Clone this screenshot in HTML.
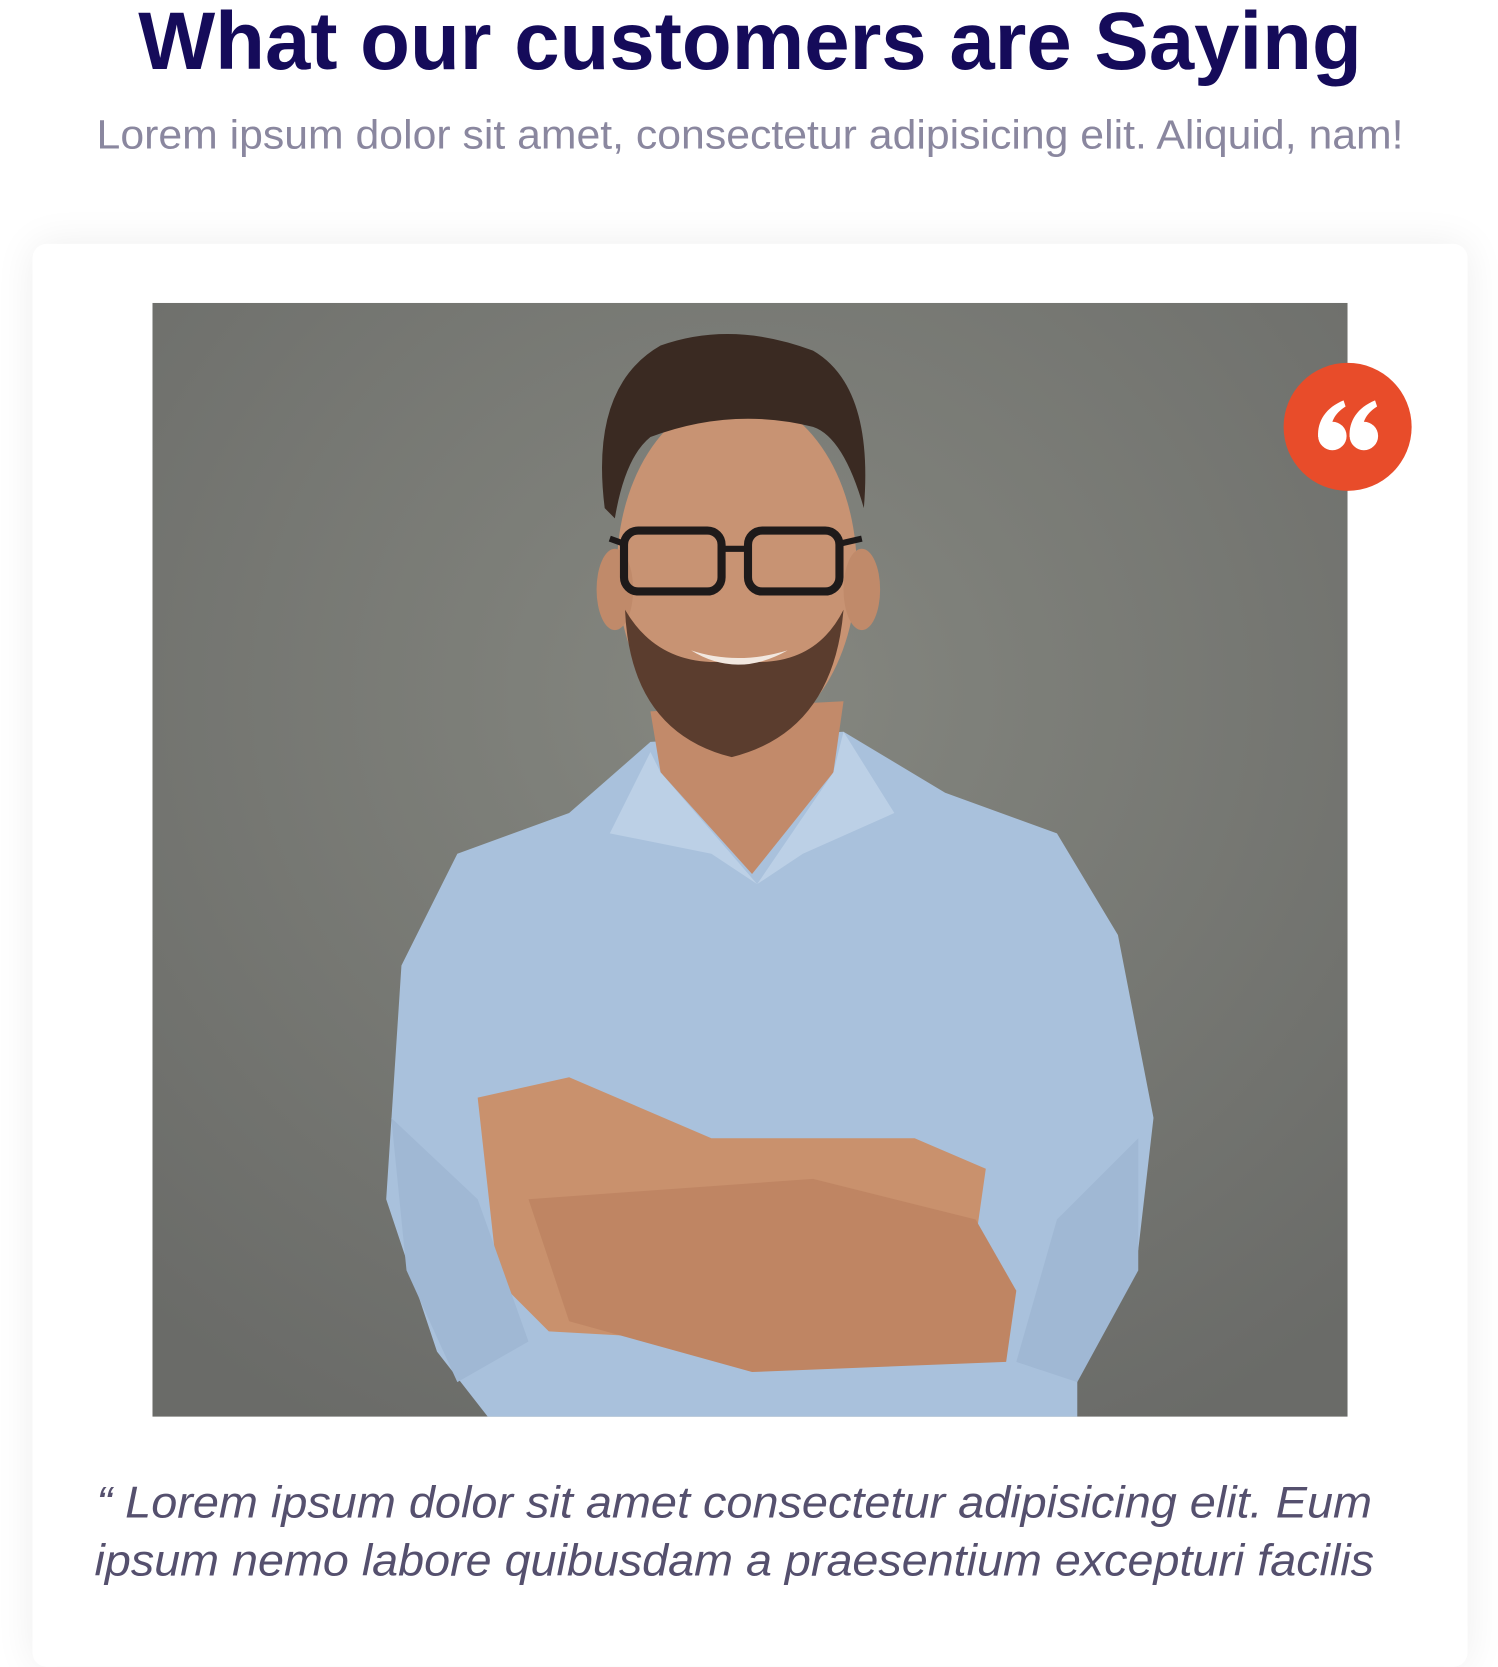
<!DOCTYPE html>
<html><head><meta charset="utf-8"><style>
html,body{margin:0;padding:0;background:#fff;width:1498px;height:1594px;overflow:hidden;font-family:"Liberation Sans",sans-serif}
.wrap{position:absolute;left:0;top:0;width:1474px;height:1569px;transform:scale(1.0163);transform-origin:0 0}
.card{position:absolute;left:32px;top:240px;width:1412px;height:1400px;background:#fff;border-radius:14px;box-shadow:0 0 40px rgba(0,0,0,0.07)}
svg{position:absolute;left:0;top:0}
</style></head><body>
<div class="wrap">
<div class="card"></div>
<svg width="1474" height="1569" viewBox="0 0 1474 1569">
<defs>
<radialGradient id="bg" cx="0.5" cy="0.35" r="0.75">
<stop offset="0" stop-color="#858780"/><stop offset="1" stop-color="#6a6b68"/></radialGradient>
<clipPath id="ph"><rect x="150" y="298" width="1176" height="1096"/></clipPath>
</defs>
<text x="738" y="68" text-anchor="middle" font-size="80" font-weight="bold" fill="#150b5a" textLength="1204" lengthAdjust="spacingAndGlyphs">What our customers are Saying</text>
<text x="738" y="146" text-anchor="middle" font-size="40" fill="#8a879f" textLength="1286" lengthAdjust="spacingAndGlyphs">Lorem ipsum dolor sit amet, consectetur adipisicing elit. Aliquid, nam!</text>
<g clip-path="url(#ph)">
<rect x="150" y="298" width="1176" height="1096" fill="url(#bg)"/>
<path d="M640 730 L560 800 L450 840 L395 950 L380 1180 L430 1330 L480 1394 L1060 1394 L1060 1340 L1120 1230 L1135 1100 L1100 920 L1040 820 L930 780 L830 720 Z" fill="#a9c1dc"/>
<path d="M640 700 L650 760 L740 860 L820 760 L830 690 Z" fill="#c28a6a"/>
<path d="M640 740 L600 820 L700 840 L745 870 L650 760 Z" fill="#bcd0e6"/>
<path d="M830 720 L880 800 L790 840 L745 870 L820 760 Z" fill="#bcd0e6"/>
<path d="M470 1080 L560 1060 L700 1120 L900 1120 L970 1150 L960 1220 L720 1320 L540 1310 L490 1260 Z" fill="#c9916d"/>
<path d="M520 1180 L800 1160 L960 1200 L1000 1270 L990 1340 L740 1350 L560 1300 Z" fill="#bf8563"/>
<path d="M385 1100 L470 1180 L520 1320 L450 1360 L400 1250 Z" fill="#a0b8d4"/>
<path d="M1120 1120 L1040 1200 L1000 1340 L1060 1360 L1120 1250 Z" fill="#a0b8d4"/>
<ellipse cx="725" cy="560" rx="118" ry="170" fill="#c89373"/>
<ellipse cx="605" cy="580" rx="18" ry="40" fill="#c08a6a"/>
<ellipse cx="848" cy="580" rx="18" ry="40" fill="#c08a6a"/>
<path d="M615 600 Q620 720 720 745 Q820 720 830 600 Q800 660 725 650 Q650 660 615 600 Z" fill="#5b3d2e"/>
<path d="M680 640 Q725 668 775 640 Q725 655 680 640Z" fill="#f2e8e0"/>
<path d="M595 500 Q580 380 650 340 Q720 315 800 345 Q860 380 850 500 Q830 430 800 420 Q720 400 640 430 Q615 450 605 510 Z" fill="#3a2a22"/>
<rect x="614" y="522" width="96" height="60" rx="14" fill="none" stroke="#1e1a1a" stroke-width="8"/>
<rect x="736" y="522" width="90" height="60" rx="14" fill="none" stroke="#1e1a1a" stroke-width="8"/>
<path d="M710 540 L736 540 M826 535 L848 530 M614 535 L600 530" stroke="#1e1a1a" stroke-width="6"/>
</g>
<circle cx="1326" cy="420" r="63" fill="#e84c2a"/>
<g fill="#fff">
<circle cx="1311" cy="429" r="14"/>
<path d="M1297 430 C1296 414 1305 401 1322 394 L1324 400 C1313 407 1308 416 1310 430 Z"/>
<circle cx="1342" cy="429" r="14"/>
<path d="M1328 430 C1327 414 1336 401 1353 394 L1355 400 C1344 407 1339 416 1341 430 Z"/>
</g>
<g font-style="italic" font-size="44" fill="#55506e">
<text x="95" y="1493" textLength="1255" lengthAdjust="spacingAndGlyphs">“ Lorem ipsum dolor sit amet consectetur adipisicing elit. Eum</text>
<text x="93" y="1550" textLength="1259" lengthAdjust="spacingAndGlyphs">ipsum nemo labore quibusdam a praesentium excepturi facilis</text>
</g>
</svg>
</div>
</body></html>
